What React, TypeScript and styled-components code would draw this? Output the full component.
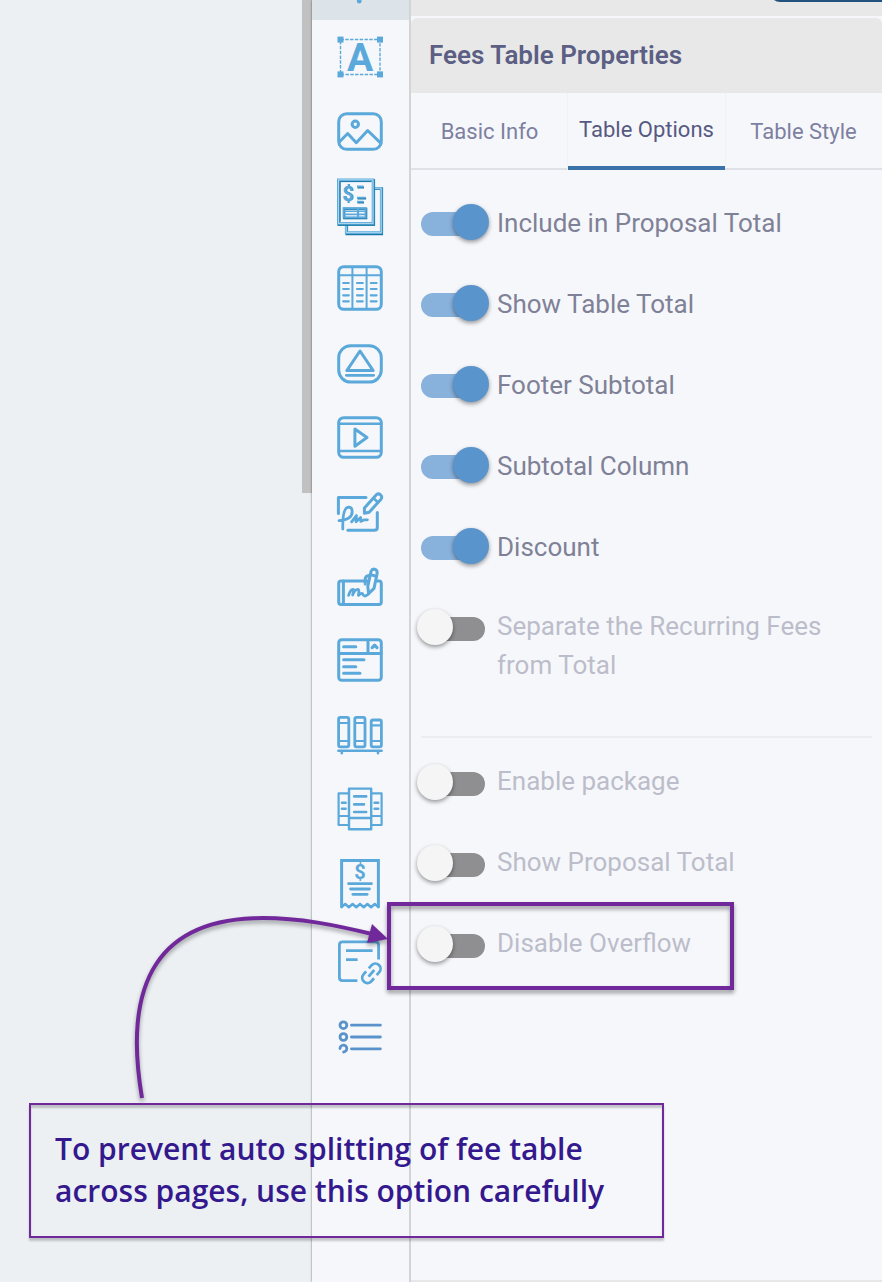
import React, { useState } from "react";
import styled, { createGlobalStyle, css } from "styled-components";

const GlobalStyle = createGlobalStyle`
  *, *::before, *::after { box-sizing: border-box; }
  body {
    margin: 0;
    background: #ecf0f3;
    font-family: Roboto, "Open Sans", sans-serif;
    color: #7d7f96;
  }
`;

const Page = styled.div`
  display: grid;
  grid-template-columns: minmax(0, 312fr) 99px minmax(0, 471fr);
  min-height: 100vh;
  overflow: hidden;
`;

const Canvas = styled.main`
  display: flex;
  justify-content: flex-end;
  background: #ecf0f3;
`;

const ScrollThumb = styled.div`
  width: 10px;
  height: 493px;
  background: #c1c1c1;
`;

const Rail = styled.nav`
  display: flex;
  flex-direction: column;
  background: #f6f7fb;
  border-right: 2px solid #d3d4d6;
  box-shadow: 0 0 2px rgba(0, 0, 0, 0.55);
`;

const Tool = styled.button<{ $active?: boolean; $gapAfter?: boolean }>`
  display: flex;
  align-items: flex-end;
  height: ${(p) => (p.$active ? "20px" : "75px")};
  margin: 0 0 ${(p) => (p.$gapAfter ? "5px" : "0")};
  padding: 0 0 0 24px;
  border: 0;
  background: ${(p) => (p.$active ? "#dce4ea" : "transparent")};
  cursor: pointer;
`;

const Glyph = styled.svg<{ $tone?: string }>`
  display: block;
  width: 48px;
  height: 100%;
  fill: none;
  stroke: ${(p) => p.$tone ?? "#5ba9da"};
  stroke-width: 3;
  stroke-linecap: round;
  stroke-linejoin: round;

  text {
    fill: #5ba9da;
    stroke: none;
    text-anchor: middle;
    font-family: Roboto, sans-serif;
    font-weight: 700;
  }
`;

const Panel = styled.aside`
  display: flex;
  flex-direction: column;
  background: #f6f7fb;
  border-bottom: 2px solid #e6e7e9;
`;

const TopStrip = styled.div`
  display: flex;
  justify-content: flex-end;
  height: 16px;
  margin-bottom: 2px;
  background: #e8e8e8;
`;

const PrimaryButton = styled.button`
  width: 112px;
  height: 40px;
  margin-top: -38px;
  border: 0;
  border-radius: 10px 0 0 10px;
  background: #22527e;
`;

const PanelHeader = styled.header`
  display: flex;
  align-items: center;
  height: 75px;
  padding: 0 18px 2px;
  border-radius: 6px 6px 0 0;
  background: #e8e8e8;
`;

const Title = styled.h1`
  margin: 0;
  font-size: 26px;
  line-height: 32px;
  font-weight: 600;
  color: #5c5f84;
`;

const Tabs = styled.div`
  display: grid;
  grid-template-columns: repeat(3, 1fr);
  height: 77px;
`;

const Tab = styled.button<{ $active: boolean }>`
  padding: 2px 0 0;
  border: 0;
  border-bottom: 2px solid #dfe1e6;
  background: transparent;
  font-family: inherit;
  font-size: 22px;
  line-height: 28px;
  color: #7d80a0;
  white-space: nowrap;
  cursor: pointer;
  ${(p) =>
    p.$active &&
    css`
      padding-top: 0;
      border-bottom: 4px solid #3b73a9;
      box-shadow: -1px 0 #eff1f5, 1px 0 #eff1f5;
      color: #565a82;
    `}
`;

const Options = styled.ul<{ $first?: boolean }>`
  margin: 0;
  padding: ${(p) => (p.$first ? "13px" : "0")} 0 0;
  list-style: none;
`;

const Option = styled.li<{ $muted: boolean }>`
  position: relative;
  padding: ${(p) => (p.$muted ? "19px 40px 23px 10px" : "21px 40px 21px 10px")};
`;

const OptionLabel = styled.label<{ $muted: boolean }>`
  display: flex;
  align-items: flex-start;
  gap: 12px;
  font-size: 26px;
  line-height: 39px;
  color: ${(p) => (p.$muted ? "#bcbdca" : "#7f8197")};
  cursor: pointer;
`;

const Switch = styled.input<{ $muted: boolean }>`
  appearance: none;
  position: relative;
  flex: none;
  width: 64px;
  height: 24px;
  margin: ${(p) => (p.$muted ? "10px" : "8px")} 0 0;
  border-radius: 12px;
  background: #8f8f91;
  cursor: pointer;

  &::before {
    content: "";
    position: absolute;
    top: -8px;
    left: -4px;
    width: 36px;
    height: 36px;
    border-radius: 50%;
    background: #f5f5f5;
    box-shadow: 0 2px 4px rgba(0, 0, 0, 0.4);
  }

  &:checked {
    background: #88b1dc;
  }

  &:checked::before {
    left: 32px;
    background: #5a94cd;
  }
`;

const Divider = styled.hr`
  width: auto;
  height: 2px;
  margin: 28px 10px 5px;
  border: 0;
  background: #ecedf0;
`;

const Highlight = styled.div`
  position: absolute;
  top: -3px;
  left: -24px;
  width: 347px;
  height: 88px;
  border: 4px solid #70289a;
  filter: drop-shadow(0 3px 2px rgba(0, 0, 0, 0.4));
  pointer-events: none;
`;

const Arrow = styled.svg`
  position: absolute;
  top: 0;
  left: -291px;
  width: 275px;
  height: 200px;
  filter: drop-shadow(0 3px 2px rgba(0, 0, 0, 0.35));
  pointer-events: none;
`;

const Callout = styled.p`
  position: absolute;
  top: 198px;
  left: -382px;
  width: 635px;
  margin: 0;
  padding: 23px 24px 24px;
  border: 2px solid #70289a;
  box-shadow: 0 3px 2px rgba(0, 0, 0, 0.2), inset 0 3px 2px rgba(0, 0, 0, 0.2);
  font-family: "Open Sans", sans-serif;
  font-size: 30px;
  line-height: 42px;
  font-weight: 600;
  white-space: nowrap;
  color: #34198e;
`;

const tools: { name: string; gapAfter?: boolean; tone?: string; art: React.ReactNode }[] = [
  {
    name: "Text",
    art: (
      <>
        <rect x="4.5" y="19.5" width="39.5" height="35" strokeWidth="1.4" strokeDasharray="3.4 1.4" strokeLinecap="butt" />
        <g fill="#5ba9da" stroke="none">
          <rect x="1.5" y="16.6" width="6" height="6" />
          <rect x="41" y="16.6" width="6" height="6" />
          <rect x="1.5" y="51.4" width="6" height="6" />
          <rect x="41" y="51.4" width="6" height="6" />
        </g>
        <text x="24.2" y="51" fontSize="39">A</text>
      </>
    ),
  },
  {
    name: "Image",
    art: (
      <>
        <rect x="2.7" y="18.7" width="42.6" height="35.6" rx="8" />
        <circle cx="19.3" cy="29.3" r="3.2" />
        <path d="M3.5 46.7 11.7 38.5 20.3 47.7 31.7 35.5 45 48.3" />
      </>
    ),
  },
  {
    name: "Fees table",
    gapAfter: true,
    art: (
      <g strokeLinecap="butt" strokeLinejoin="miter">
        <path d="M38 18.6H45.8V64H10.8V55" strokeWidth="2.6" stroke="#1878aa" />
        <path d="M38 18.2H45.2V62.6H10.2V55" strokeWidth="2.6" />
        <path d="M38 18.2H45.2V62.6H10.2V55" strokeWidth="0.8" stroke="#bfe0f2" />
        <rect x="2.8" y="10.4" width="35" height="44.2" strokeWidth="2.6" stroke="#1878aa" />
        <rect x="2.4" y="9.8" width="34.6" height="43.6" strokeWidth="2.6" />
        <rect x="2.4" y="9.8" width="34.6" height="43.6" strokeWidth="0.8" stroke="#bfe0f2" />
        <path d="M4.2 51.8V11.6H35" strokeWidth="1" stroke="#1878aa" />
        <path d="M21.5 17.4h6.5M21.5 28.6h8.6M21.5 32.6h6.5" strokeWidth="2" stroke="#1878aa" />
        <path d="M21 16.5h6.5M21 27.6h8.6M21 31.6h6.5" strokeWidth="1.8" />
        <text x="12.6" y="31.2" fontSize="20" style={{ fill: "#1878aa" }}>$</text>
        <text x="12" y="30.8" fontSize="20">$</text>
        <rect x="8.2" y="38.8" width="22" height="9.4" strokeWidth="2.2" stroke="#1878aa" />
        <rect x="7.6" y="38.2" width="22" height="9.2" strokeWidth="2" />
        <path d="M8 41.2h21.6M8 44.4h21.6" strokeWidth="1.6" />
        <path d="M22 38v10" strokeWidth="2.2" />
      </g>
    ),
  },
  {
    name: "Table",
    art: (
      <>
        <rect x="2.7" y="16.7" width="42.6" height="42.6" rx="5" />
        <path d="M16.4 17v42M30.6 17v42M3 25.3h42" strokeWidth="2" />
        <path
          d="M7.2 33h5.6M21 33h5.8M34.8 33h5.8M7.2 39h5.6M21 39h5.8M34.8 39h5.8M7.2 45.3h5.6M21 45.3h5.8M34.8 45.3h5.8M7.2 51.3h5.6M21 51.3h5.8M34.8 51.3h5.8"
          strokeWidth="2.2"
        />
      </>
    ),
  },
  {
    name: "Shape",
    art: (
      <>
        <rect x="2.7" y="20.7" width="42.6" height="36.4" rx="12" />
        <path d="M24 26 37.2 45.6H10.8Z" />
        <path d="M10.4 50.3h27.2" strokeWidth="2.8" />
      </>
    ),
  },
  {
    name: "Video",
    art: (
      <>
        <rect x="2.7" y="17.7" width="42.6" height="39.6" rx="5" />
        <path d="M3 23.7h42M3 51h42" strokeWidth="2.6" />
        <path d="M18.9 29v17.2L31 37.5Z" />
      </>
    ),
  },
  {
    name: "Signature",
    art: (
      <>
        <path d="M2.4 38.6V22.4H30M11.8 55.3H38.4Q41.3 55.3 41.3 52.4V37.6" />
        <path d="M28.4 38.2V33L40.6 19.6Q42.4 18 44.6 19.8 46.6 21.8 45 24.2L33.2 37.2Z" />
        <path d="M37.6 23.2 41.8 27.2" strokeWidth="2.6" />
        <path d="M3 45.6Q16.2 44.6 16.2 36.4 16 31.4 11.6 32.4 6.4 34 6.8 54M15.6 46.8 20.4 40.6 20 46.8 24.6 42.4 24.8 46.4 28.2 44.8H31.4" strokeWidth="2.8" />
      </>
    ),
  },
  {
    name: "Initials",
    art: (
      <>
        <rect x="2.7" y="31" width="42.6" height="23.4" rx="2.4" />
        <path d="M7.4 31v23" strokeWidth="3" />
        <path d="M32.6 43.6 31.8 36.4 35 21.4Q36.4 18.4 39.2 19.4 41.8 20.6 41 24.2L38 38.4Z" fill="#f6f7fb" />
        <path d="M34.4 24.6 39.6 26M29.2 34V28.6Q29.8 25.8 33 25.4" />
        <path d="M12.6 45.4Q15 38.4 17.4 39.6 18 41 16.6 45 19.4 38.6 22.4 39.6 23.4 41 22.4 45.4 25 43 26.4 43.6 28 48.2 32.4 44" strokeWidth="2.8" />
      </>
    ),
  },
  {
    name: "Form",
    art: (
      <>
        <rect x="2.7" y="14.7" width="42.6" height="40.6" rx="3" />
        <path d="M3 28.6h42M32 15v13" />
        <path d="M7.6 21.7h12.2M7.6 34.8h20.4M7.6 41.7h12.2M7.6 48.3h16.4" />
        <path d="M36.2 22.6 38.6 20.2 41 22.6" strokeWidth="3.2" />
      </>
    ),
  },
  {
    name: "Library",
    art: (
      <>
        <rect x="2.6" y="17.4" width="10.2" height="29.4" rx="1.8" strokeWidth="2.8" />
        <rect x="18.8" y="17.4" width="10.2" height="29.4" rx="1.8" strokeWidth="2.8" />
        <rect x="35.2" y="20" width="10.2" height="26.8" rx="1.8" strokeWidth="2.8" />
        <path d="M3 23h10M3 41h10M19 23h10M19 41h10M35 25.4h10M35 41h10" strokeWidth="2.2" />
        <path d="M2.4 50.8h43.2M5.8 51v2.2M42 51v2.2" strokeWidth="2.6" />
      </>
    ),
  },
  {
    name: "Templates",
    art: (
      <>
        <path d="M12.8 18.4H2.6V50h10.2M35.4 18.4H45.6V50H35.4M3 41h9.6M36 41h9.6" strokeWidth="2.2" />
        <rect x="13" y="13.6" width="22.2" height="40.6" strokeWidth="2.4" />
        <path d="M13 43h22" strokeWidth="2.4" />
        <path d="M18.2 21.4h12M18.2 29.4h9.8M18.2 37h12M6 27.7h3.6M6 33.7h3.6M38.6 27.7h3.6M38.6 33.7h3.6" strokeWidth="2.6" />
      </>
    ),
  },
  {
    name: "Receipt",
    art: (
      <>
        <path d="M5.6 56.6V10.4H42.4V56.6" strokeLinejoin="miter" />
        <path d="M5.6 57 9.2 54 12.9 57.2 16.6 54 20.3 57.2 24 54 27.7 57.2 31.4 54 35.1 57.2 38.8 54 42.4 57" strokeWidth="2.6" />
        <text x="24" y="28.6" fontSize="20">$</text>
        <path d="M12.6 33.7h22.8M14.6 39h18.8M16.8 44.3h14.4" strokeWidth="2.8" />
      </>
    ),
  },
  {
    name: "Linked document",
    art: (
      <>
        <path d="M21.4 55.6H6.4Q3.4 55.6 3.4 52.6V20Q3.4 16.8 6.4 16.8H39.4Q42.6 16.8 42.6 20V34.4" strokeWidth="2.8" strokeLinecap="butt" />
        <path d="M10 25.7h26.6M10 34.7h11.6" strokeWidth="2.8" strokeLinecap="butt" />
        <g transform="translate(35.4 48.3) rotate(-49)" strokeWidth="2.8" strokeLinecap="butt">
          <path d="M-2 5.2H-6A5.2 5.2 0 0 1-6-5.2H-2M2-5.2H6A5.2 5.2 0 0 1 6 5.2H2M-4.4 0H4.4" />
        </g>
      </>
    ),
  },
  {
    name: "List",
    tone: "#5a93cc",
    art: (
      <>
        <circle cx="7.4" cy="25.2" r="3.4" strokeWidth="2.8" />
        <circle cx="7.4" cy="37" r="3.4" strokeWidth="2.8" />
        <path d="M4 48.6A3.4 3.4 0 1 1 7.6 52" strokeWidth="2.8" />
        <path d="M15.4 25.2h29M15.4 37h29M15.4 48.8h29" strokeWidth="2.8" />
      </>
    ),
  },
];

const totalOptions = [
  { label: "Include in Proposal Total", on: true },
  { label: "Show Table Total", on: true },
  { label: "Footer Subtotal", on: true },
  { label: "Subtotal Column", on: true },
  { label: "Discount", on: true },
  { label: "Separate the Recurring Fees from Total", on: false },
];

const packageOptions = [
  { label: "Enable package", on: false },
  { label: "Show Proposal Total", on: false },
];

const tabNames = ["Basic Info", "Table Options", "Table Style"];

function SwitchOption({ label, on, children }: { label: string; on: boolean; children?: React.ReactNode }) {
  const [checked, setChecked] = useState(on);
  const id = label.toLowerCase().replace(/\s+/g, "-");
  return (
    <Option $muted={!checked}>
      <OptionLabel $muted={!checked} htmlFor={id}>
        <Switch
          id={id}
          type="checkbox"
          $muted={!checked}
          checked={checked}
          onChange={(e) => setChecked(e.target.checked)}
        />
        <span>{label}</span>
      </OptionLabel>
      {children}
    </Option>
  );
}

export default function App() {
  const [tab, setTab] = useState("Table Options");
  return (
    <>
      <GlobalStyle />
      <Page>
        <Canvas>
          <ScrollThumb />
        </Canvas>
        <Rail aria-label="Insert">
          <Tool $active aria-label="Add">
            <Glyph viewBox="0 0 48 20">
              <path d="M23.2-2V1.2" strokeWidth="4.6" />
            </Glyph>
          </Tool>
          {tools.map((t) => (
            <Tool key={t.name} aria-label={t.name} $gapAfter={t.gapAfter}>
              <Glyph viewBox="0 0 48 75" $tone={t.tone}>
                {t.art}
              </Glyph>
            </Tool>
          ))}
        </Rail>
        <Panel>
          <TopStrip>
            <PrimaryButton aria-label="Save" />
          </TopStrip>
          <PanelHeader>
            <Title>Fees Table Properties</Title>
          </PanelHeader>
          <Tabs role="tablist">
            {tabNames.map((name) => (
              <Tab key={name} role="tab" aria-selected={name === tab} $active={name === tab} onClick={() => setTab(name)}>
                {name}
              </Tab>
            ))}
          </Tabs>
          <Options $first>
            {totalOptions.map((o) => (
              <SwitchOption key={o.label} {...o} />
            ))}
          </Options>
          <Divider />
          <Options>
            {packageOptions.map((o) => (
              <SwitchOption key={o.label} {...o} />
            ))}
            <SwitchOption label="Disable Overflow" on={false}>
              <Highlight />
              <Arrow viewBox="0 0 275 200" aria-hidden="true">
                <path d="M22 193C2 75 40 13 143 13 180 13 215 20 252 29" fill="none" stroke="#70289a" strokeWidth="4" />
                <path d="M268 34 252 19 247 38Z" fill="#70289a" />
              </Arrow>
              <Callout>
                To prevent auto splitting of fee table
                <br />
                across pages, use this option carefully
              </Callout>
            </SwitchOption>
          </Options>
        </Panel>
      </Page>
    </>
  );
}
